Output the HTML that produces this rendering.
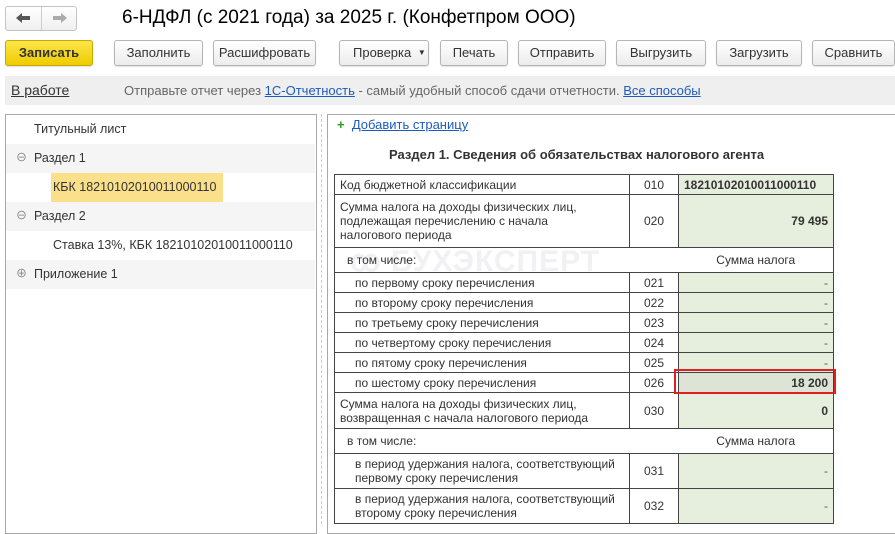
<!DOCTYPE html>
<html><head><meta charset="utf-8"><style>
*{margin:0;padding:0;box-sizing:border-box}
body{width:895px;height:524px;overflow:hidden;background:#fff;font-family:"Liberation Sans","Noto Sans CJK SC",sans-serif;font-size:12px;color:#333;position:relative}
.a{position:absolute}
.btn{position:absolute;top:40px;height:26px;border:1px solid #b5b5b5;border-radius:3px;background:linear-gradient(#fff,#ececec);text-align:center;line-height:24px;font-size:13px;color:#333;box-shadow:0 1px 1px rgba(0,0,0,.12)}
.row{position:absolute;left:6px;width:309px;height:29px;line-height:29px;font-size:12.5px;color:#333}
table{border-collapse:collapse;position:absolute;left:334px;top:174px;width:500px;font-size:12px;color:#333}
td{border:1px solid #444;padding:0 5px;line-height:14px}
td.c{text-align:center;width:49px}
td.v{background:#e6efdd;text-align:right;font-weight:bold;width:155px;padding-right:5px}
td.d{font-weight:normal;color:#555}
</style></head><body>
<div class="a" style="left:5px;top:6px;width:72px;height:25px;border:1px solid #c4c4c4;border-radius:3px;background:linear-gradient(#fff,#efefef)"></div>
<div class="a" style="left:41px;top:7px;width:1px;height:23px;background:#ccc"></div>
<svg class="a" style="left:15px;top:12px" width="16" height="12"><path d="M1 6L7 1V4H15V8H7V11Z" fill="#555"/></svg>
<svg class="a" style="left:52px;top:12px" width="16" height="12"><path d="M15 6L9 1V4H1V8H9V11Z" fill="#aaa"/></svg>
<div class="a" style="left:122px;top:7px;font-size:19px;color:#000">6-НДФЛ (с 2021 года) за 2025 г. (Конфетпром ООО)</div>
<div class="btn" style="left:5px;width:88px;background:linear-gradient(#fbe64a,#efcb00);border-color:#c9a800;font-weight:bold;color:#333">Записать</div>
<div class="btn" style="left:114px;width:89px">Заполнить</div>
<div class="btn" style="left:213px;width:103px">Расшифровать</div>
<div class="btn" style="left:339px;width:90px;text-align:left;padding-left:13px">Проверка <span style="font-size:8px;position:relative;top:-2px;margin-left:3px">▼</span></div>
<div class="btn" style="left:440px;width:68px">Печать</div>
<div class="btn" style="left:518px;width:88px">Отправить</div>
<div class="btn" style="left:616px;width:90px">Выгрузить</div>
<div class="btn" style="left:716px;width:86px">Загрузить</div>
<div class="btn" style="left:812px;width:83px">Сравнить</div>
<div class="a" style="left:5px;top:76px;width:890px;height:29px;background:#efefef"></div>
<div class="a" style="left:11px;top:82px;font-size:14px;color:#333;text-decoration:underline">В работе</div>
<div class="a" style="left:124px;top:83px;font-size:13px;color:#666">Отправьте отчет через <span style="color:#1d5bbf;text-decoration:underline">1С-Отчетность</span> - самый удобный способ сдачи отчетности. <span style="color:#1d5bbf;text-decoration:underline">Все способы</span></div>
<div class="a" style="left:5px;top:114px;width:312px;height:420px;border:1px solid #a8a8a8"></div>
<div class="a" style="left:321px;top:114px;height:410px;border-left:1px dashed #ccc"></div>
<div class="a" style="left:327px;top:114px;width:580px;height:420px;border:1px solid #a8a8a8"></div>
<div class="row" style="top:115px;padding-left:28px">Титульный лист</div>
<div class="row" style="top:144px;background:#f5f5f5;padding-left:28px"><span class="a" style="left:10px;font-size:11px;color:#777">⊖</span>Раздел 1</div>
<div class="a" style="left:51px;top:173px;width:172px;height:29px;background:#fbe08c"></div>
<div class="row" style="top:173px;padding-left:47px">КБК 18210102010011000110</div>
<div class="row" style="top:202px;background:#f5f5f5;padding-left:28px"><span class="a" style="left:10px;font-size:11px;color:#777">⊖</span>Раздел 2</div>
<div class="row" style="top:231px;padding-left:47px">Ставка 13%, КБК 18210102010011000110</div>
<div class="row" style="top:260px;background:#f5f5f5;padding-left:28px"><span class="a" style="left:10px;font-size:11px;color:#777">⊕</span>Приложение 1</div>
<div class="a" style="left:337px;top:117px;font-size:13px;color:#1d5bbf"><b style="color:#2a9d2a">+</b>&nbsp; <u>Добавить страницу</u></div>
<div class="a" style="left:389px;top:147px;font-size:13px;font-weight:bold;color:#333">Раздел 1. Сведения об обязательствах налогового агента</div>
<div class="a" style="left:350px;top:244px;font-size:30px;font-weight:bold;color:rgba(210,210,215,.3);letter-spacing:1px">ꝏ БУХЭКСПЕРТ</div>
<table>
<tr style="height:20px"><td>Код бюджетной классификации</td><td class="c">010</td><td class="v" style="text-align:left">18210102010011000110</td></tr>
<tr style="height:53px"><td>Сумма налога на доходы физических лиц,<br>подлежащая перечислению с начала<br>налогового периода</td><td class="c">020</td><td class="v">79 495</td></tr>
<tr style="height:25px"><td colspan="2" style="border-right:none;padding-left:12px">в том числе:</td><td style="border-left:none;text-align:center">Сумма налога</td></tr>
<tr style="height:20px"><td style="padding-left:20px">по первому сроку перечисления</td><td class="c">021</td><td class="v d">-</td></tr>
<tr style="height:20px"><td style="padding-left:20px">по второму сроку перечисления</td><td class="c">022</td><td class="v d">-</td></tr>
<tr style="height:20px"><td style="padding-left:20px">по третьему сроку перечисления</td><td class="c">023</td><td class="v d">-</td></tr>
<tr style="height:20px"><td style="padding-left:20px">по четвертому сроку перечисления</td><td class="c">024</td><td class="v d">-</td></tr>
<tr style="height:20px"><td style="padding-left:20px">по пятому сроку перечисления</td><td class="c">025</td><td class="v d">-</td></tr>
<tr style="height:20px"><td style="padding-left:20px">по шестому сроку перечисления</td><td class="c">026</td><td class="v" style="background:#dde4d5">18 200</td></tr>
<tr style="height:36px"><td>Сумма налога на доходы физических лиц,<br>возвращенная с начала налогового периода</td><td class="c">030</td><td class="v">0</td></tr>
<tr style="height:25px"><td colspan="2" style="border-right:none;padding-left:12px">в том числе:</td><td style="border-left:none;text-align:center">Сумма налога</td></tr>
<tr style="height:35px"><td style="padding-left:20px">в период удержания налога, соответствующий<br>первому сроку перечисления</td><td class="c">031</td><td class="v d">-</td></tr>
<tr style="height:35px"><td style="padding-left:20px">в период удержания налога, соответствующий<br>второму сроку перечисления</td><td class="c">032</td><td class="v d">-</td></tr>
</table>
<div class="a" style="left:674px;top:369px;width:162px;height:25px;border:2px solid #e02020"></div>
</body></html>
